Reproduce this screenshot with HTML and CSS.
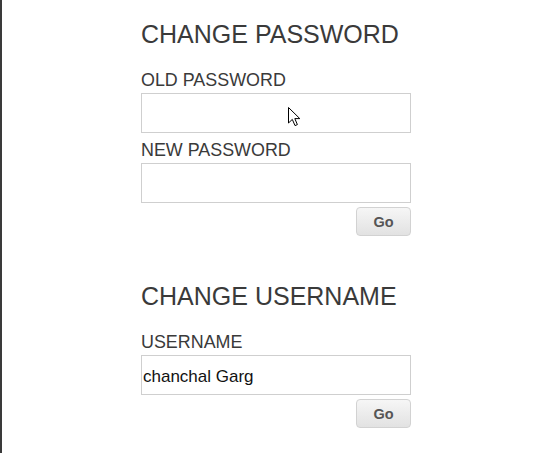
FILE: index.html
```html
<!DOCTYPE html>
<html>
<head>
<meta charset="utf-8">
<link rel="stylesheet" href="styles.css">
</head>
<body>
<div class="page">
  <div class="column">
    <section class="block">
      <h2 class="title">CHANGE PASSWORD</h2>
      <label class="label">OLD PASSWORD</label>
      <div class="field-wrap">
        <input class="field" type="password">
        <svg class="cursor" width="13" height="20" viewBox="0 0 13 20"><path d="M0.5 0.5 L0.5 16 L4.3 12.4 L7 18.6 L9.4 17.6 L6.8 11.6 L11.8 11.6 Z" fill="#fff" stroke="#000" stroke-width="1" stroke-linejoin="miter"/></svg>
      </div>
      <label class="label">NEW PASSWORD</label>
      <input class="field" type="password">
      <div class="actions"><button class="btn">Go</button></div>
    </section>
    <section class="block">
      <h2 class="title">CHANGE USERNAME</h2>
      <label class="label">USERNAME</label>
      <input class="field" type="text" value="chanchal Garg">
      <div class="actions"><button class="btn">Go</button></div>
    </section>
  </div>
</div>
</body>
</html>
```
FILE: styles.css
```css
html, body {
  margin: 0;
  padding: 0;
  background: #fff;
}
body {
  font-family: "Liberation Sans", Arial, sans-serif;
  color: #333;
}
.page {
  min-height: 453px;
  border-left: 2px solid #3a3a3a;
  box-sizing: border-box;
  padding-left: 139px;
}
.column {
  width: 270px;
}
.block {
  display: flex;
  flex-direction: column;
}
.block + .block {
  margin-top: 26px;
}
.title {
  margin: 20px 0 0;
  font-size: 25px;
  line-height: 28px;
  font-weight: normal;
  color: #3a3a3a;
}
.label {
  display: block;
  margin: 22px 0 3px;
  font-size: 17.9px;
  line-height: 20px;
  color: #3a3a3a;
}
.field + .label {
  margin-top: 7px;
}
.field-wrap + .label {
  margin-top: 7px;
}
.field-wrap {
  position: relative;
}
.field {
  display: block;
  width: 270px;
  height: 40px;
  box-sizing: border-box;
  border: 1px solid #cfcfcf;
  margin: 0;
  padding: 3px 1px 0;
  font-family: "Liberation Sans", Arial, sans-serif;
  font-size: 17px;
  color: #111;
  background: #fff;
  outline: none;
}
.cursor {
  position: absolute;
  left: 147px;
  top: 14px;
}
.actions {
  display: flex;
  justify-content: flex-end;
  margin-top: 4px;
}
.btn {
  width: 55px;
  height: 29px;
  box-sizing: border-box;
  border: 1px solid #d2d2d2;
  border-radius: 4px;
  background: linear-gradient(#f6f6f6, #e2e2e2);
  font-family: "Liberation Sans", Arial, sans-serif;
  font-weight: bold;
  font-size: 14.5px;
  color: #555;
  padding: 0;
}
```
